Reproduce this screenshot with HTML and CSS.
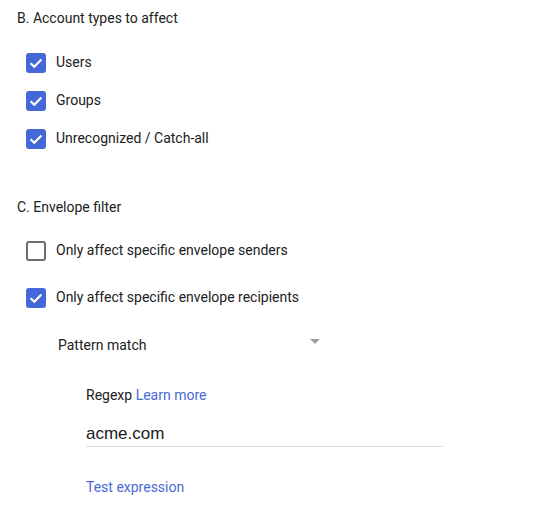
FILE: index.html
```html
<!DOCTYPE html>
<html>
<head>
<meta charset="utf-8">
<link rel="stylesheet" href="styles.css">
</head>
<body>
<div class="page">
  <section class="section">
    <div class="heading">B. Account types to affect</div>
    <div class="list list-b">
      <div class="row"><span class="cb checked"><svg viewBox="0 0 20 20"><path d="M4.6 10.2 L8.3 13.8 L15.4 6.6"/></svg></span><span class="label">Users</span></div>
      <div class="row"><span class="cb checked"><svg viewBox="0 0 20 20"><path d="M4.6 10.2 L8.3 13.8 L15.4 6.6"/></svg></span><span class="label">Groups</span></div>
      <div class="row"><span class="cb checked"><svg viewBox="0 0 20 20"><path d="M4.6 10.2 L8.3 13.8 L15.4 6.6"/></svg></span><span class="label">Unrecognized / Catch-all</span></div>
    </div>
  </section>
  <section class="section section-c">
    <div class="heading">C. Envelope filter</div>
    <div class="list list-c">
      <div class="row"><span class="cb"></span><span class="label">Only affect specific envelope senders</span></div>
      <div class="row"><span class="cb checked"><svg viewBox="0 0 20 20"><path d="M4.6 10.2 L8.3 13.8 L15.4 6.6"/></svg></span><span class="label">Only affect specific envelope recipients</span></div>
    </div>
    <div class="select">
      <span class="select-text">Pattern match</span>
      <span class="arrow"></span>
    </div>
    <div class="regexp">
      <div class="regexp-label">Regexp <a class="link">Learn more</a></div>
      <div class="input">acme.com</div>
      <div class="test"><a class="link">Test expression</a></div>
    </div>
  </section>
</div>
</body>
</html>
```
FILE: styles.css
```css
html, body {
  margin: 0;
  padding: 0;
  background: #ffffff;
}
body {
  font-family: Roboto, "Liberation Sans", Arial, sans-serif;
  font-size: 14px;
  color: #212121;
}
.page {
  width: 539px;
  height: 517px;
  overflow: hidden;
}
.section {
  padding-left: 17px;
}
.heading {
  line-height: 20px;
  padding-top: 8px;
}
.section-c {
  margin-top: 40px;
}
.section-c .heading {
  padding-top: 0;
}
.list {
  display: flex;
  flex-direction: column;
  padding-left: 9px;
}
.list-b {
  margin-top: 15px;
}
.list-c {
  margin-top: 14px;
  gap: 9px;
}
.row {
  display: flex;
  align-items: center;
  height: 38px;
}
.cb {
  box-sizing: border-box;
  width: 20px;
  height: 20px;
  border: 2px solid #6d6d6d;
  border-radius: 3px;
  flex: none;
  display: flex;
  align-items: center;
  justify-content: center;
  margin-top: 1px;
}
.cb.checked {
  background: #4568d9;
  border: none;
}
.cb svg {
  width: 20px;
  height: 20px;
}
.cb svg path {
  fill: none;
  stroke: #ffffff;
  stroke-width: 2.2;
}
.label {
  margin-left: 10px;
  line-height: 20px;
}
.select {
  display: flex;
  align-items: center;
  justify-content: space-between;
  width: 262px;
  margin-left: 41px;
  margin-top: 19px;
  line-height: 20px;
}
.arrow {
  width: 0;
  height: 0;
  border-left: 5.5px solid transparent;
  border-right: 5.5px solid transparent;
  border-top: 5.5px solid #9e9e9e;
  margin-top: -8px;
}
.regexp {
  margin-left: 69px;
  width: 357px;
}
.regexp-label {
  margin-top: 30px;
  line-height: 20px;
}
.link {
  color: #4a6ad6;
  text-decoration: none;
}
.input {
  font-family: "Liberation Sans", Arial, sans-serif;
  font-size: 17px;
  color: #202020;
  margin-top: 19px;
  line-height: 20px;
  padding-bottom: 2px;
  border-bottom: 1px solid #dcdcdc;
}
.test {
  margin-top: 30px;
  line-height: 20px;
}
```
